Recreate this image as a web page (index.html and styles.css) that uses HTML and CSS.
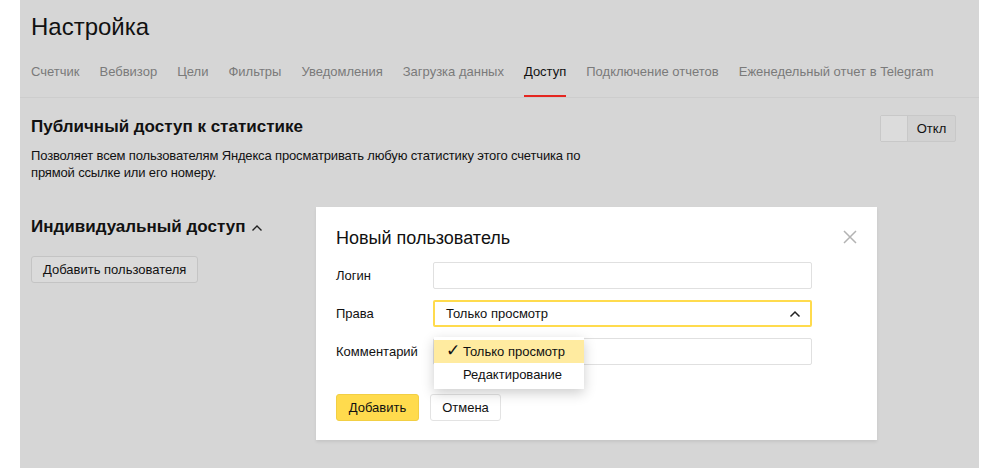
FILE: index.html
```html
<!DOCTYPE html>
<html lang="ru">
<head>
<meta charset="utf-8">
<link rel="stylesheet" href="styles.css">
</head>
<body>
<div class="panel">
  <h1 class="title">Настройка</h1>
  <nav class="tabs">
    <span class="tab">Счетчик</span>
    <span class="tab">Вебвизор</span>
    <span class="tab">Цели</span>
    <span class="tab">Фильтры</span>
    <span class="tab">Уведомления</span>
    <span class="tab">Загрузка данных</span>
    <span class="tab active">Доступ</span>
    <span class="tab">Подключение отчетов</span>
    <span class="tab">Еженедельный отчет в Telegram</span>
  </nav>
  <section class="public">
    <div class="public-text">
      <h2 class="section-title">Публичный доступ к статистике</h2>
      <p class="desc">Позволяет всем пользователям Яндекса просматривать любую статистику этого счетчика по<br>прямой ссылке или его номеру.</p>
    </div>
    <div class="toggle"><span class="toggle-knob"></span><span class="toggle-label">Откл</span></div>
  </section>
  <section class="individual">
    <h2 class="section-title">Индивидуальный доступ <svg class="chev" width="12" height="8" viewBox="0 0 12 8"><path d="M1.5 6.5 L6 2 L10.5 6.5" fill="none" stroke="#222" stroke-width="1.4"/></svg></h2>
    <button class="btn btn-plain">Добавить пользователя</button>
  </section>

  <div class="modal">
    <div class="modal-head">
      <h3 class="modal-title">Новый пользователь</h3>
      <svg class="close" width="14" height="14" viewBox="0 0 14 14"><path d="M1 1 L13 13 M13 1 L1 13" stroke="#b3b3b3" stroke-width="1.5"/></svg>
    </div>
    <div class="form">
      <label class="lbl">Логин</label>
      <div class="input"></div>
      <label class="lbl">Права</label>
      <div class="input select"><span>Только просмотр</span><svg width="12" height="8" viewBox="0 0 12 8"><path d="M1.5 6.5 L6 2 L10.5 6.5" fill="none" stroke="#222" stroke-width="1.5"/></svg></div>
      <label class="lbl">Комментарий</label>
      <div class="input comment">
        <div class="menu">
          <div class="item selected"><span class="check">✓</span>Только просмотр</div>
          <div class="item">Редактирование</div>
        </div>
      </div>
    </div>
    <div class="actions">
      <button class="btn btn-yellow">Добавить</button>
      <button class="btn btn-white">Отмена</button>
    </div>
  </div>
</div>
</body>
</html>
```
FILE: styles.css
```css
* { box-sizing: border-box; }
html, body { margin: 0; padding: 0; background: #fff; }
body { font-family: "Liberation Sans", Arial, sans-serif; color: #000; }

.panel {
  position: relative;
  margin: 0 21px 0 20px;
  height: 468px;
  background: #d6d6d6;
  padding: 0 0 0 11px;
}

.title {
  margin: 0;
  padding-top: 13px;
  font-size: 24px;
  font-weight: normal;
  line-height: 28px;
  color: #111;
}

.tabs {
  display: flex;
  gap: 20px;
  margin-top: 19px;
  margin-left: -11px;
  padding-left: 11px;
  border-bottom: 1px solid #cdcdcd;
  height: 38px;
}
.tab {
  font-size: 13px;
  color: #7a7a7a;
  line-height: 18px;
  padding-top: 3px;
  height: 37px;
  border-bottom: 2px solid transparent;
}
.tab.active {
  color: #111;
  border-bottom-color: #e52620;
}

.public {
  display: flex;
  justify-content: space-between;
  align-items: flex-start;
  padding-right: 23px;
  margin-top: 17px;
}
.section-title {
  margin: 0;
  font-size: 17px;
  font-weight: bold;
  line-height: 24px;
  color: #111;
  display: flex;
  align-items: center;
}
.desc {
  margin: 8px 0 0;
  font-size: 13px;
  letter-spacing: -0.15px;
  line-height: 17px;
  color: #111;
}
.toggle {
  display: flex;
  height: 27px;
  width: 76px;
  border: 1px solid #c8c8c8;
  border-radius: 2px;
  background: #d2d2d2;
}
.toggle-knob {
  width: 27px;
  background: #dcdcdc;
  border-right: 1px solid #c8c8c8;
}
.toggle-label {
  flex: 1;
  text-align: center;
  font-size: 13px;
  line-height: 25px;
  color: #111;
}

.individual { margin-top: 34px; }
.chev { margin-left: 6px; margin-top: 2px; }

.btn {
  font-family: inherit;
  font-size: 13px;
  height: 27px;
  border-radius: 3px;
  padding: 0 11px;
  color: #111;
  cursor: pointer;
}
.btn-plain {
  margin-top: 17px;
  background: #dadada;
  border: 1px solid #c4c4c4;
}

.modal {
  position: absolute;
  left: 296px;
  top: 207px;
  width: 561px;
  height: 233px;
  background: #fff;
  box-shadow: 0 2px 3px rgba(0,0,0,0.08);
  padding: 0 20px;
}
.modal-head {
  display: flex;
  justify-content: space-between;
  align-items: center;
  height: 55px;
  padding-top: 7px;
}
.modal-title {
  margin: 0;
  font-size: 18px;
  font-weight: normal;
  color: #111;
}
.close { margin-right: 0; margin-bottom: 2px; }

.form {
  display: grid;
  grid-template-columns: 97px 379px;
  row-gap: 11px;
  align-items: center;
}
.lbl { font-size: 13px; color: #111; }
.input {
  position: relative;
  height: 27px;
  border: 1px solid #e0e0e0;
  border-radius: 2px;
  background: #fff;
}
.select {
  border: 2px solid #ffdb4d;
  display: flex;
  align-items: center;
  justify-content: space-between;
  padding: 0 9px 0 11px;
  font-size: 13px;
  color: #111;
}
.menu {
  position: absolute;
  left: 0;
  top: -2px;
  width: 150px;
  background: #fff;
  padding: 3px 0 3px;
  box-shadow: 0 4px 12px rgba(0,0,0,0.2);
  z-index: 2;
}
.item {
  height: 23px;
  line-height: 23px;
  font-size: 13px;
  color: #111;
  padding-left: 29px;
  position: relative;
}
.item.selected { background: #ffeba0; }
.check {
  position: absolute;
  left: 12px;
  top: -1px;
  font-size: 17px;
}

.actions {
  display: flex;
  gap: 11px;
  margin-top: 29px;
}
.btn-yellow {
  background: #ffdb4d;
  border: 1px solid #f2cf44;
  width: 83px;
  padding: 0;
}
.btn-white {
  background: #fff;
  border: 1px solid #e3e3e3;
  width: 71px;
  padding: 0;
}
```
